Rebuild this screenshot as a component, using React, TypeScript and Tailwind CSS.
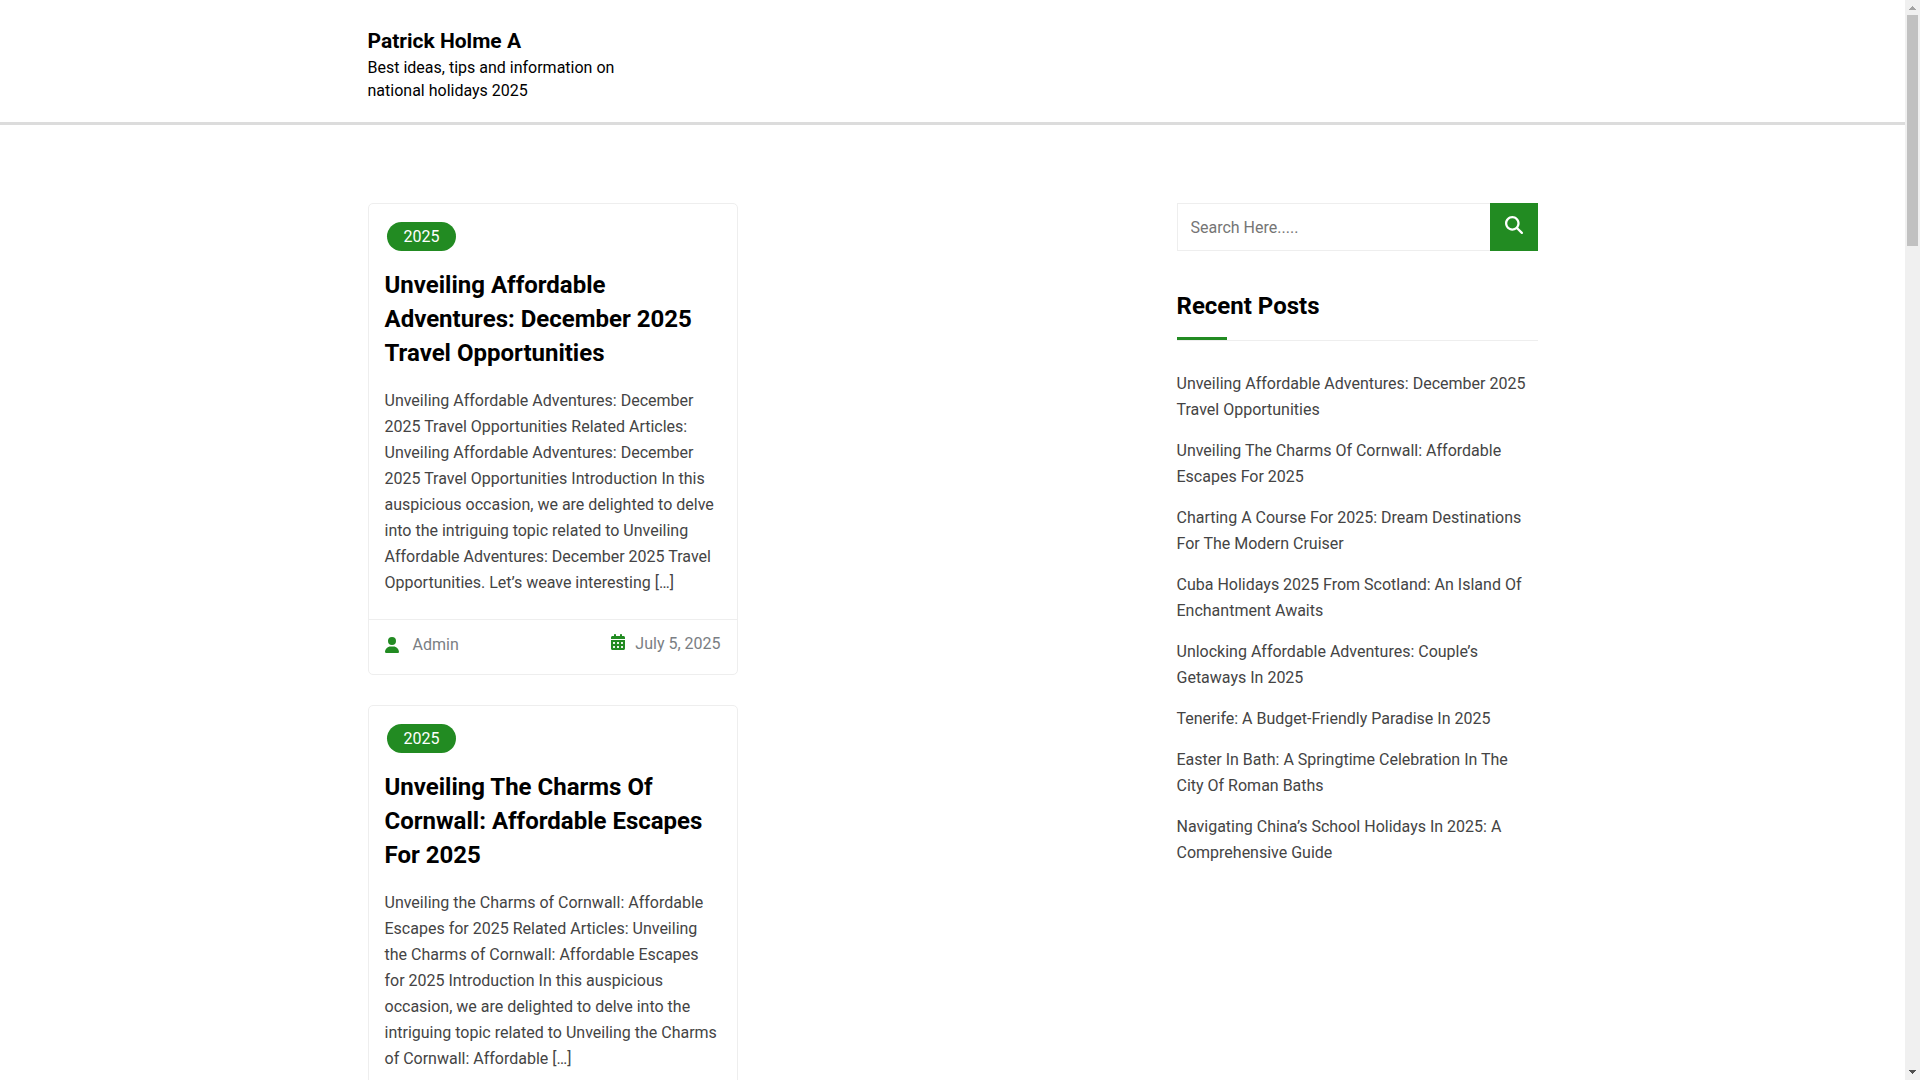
import { FaCalendarDays, FaMagnifyingGlass, FaUser } from 'react-icons/fa6';

interface Post {
  category: string;
  title: string;
  excerpt: string;
  author?: string;
  date?: string;
}

const posts: Post[] = [
  {
    category: '2025',
    title: 'Unveiling Affordable Adventures: December 2025 Travel Opportunities',
    excerpt:
      'Unveiling Affordable Adventures: December 2025 Travel Opportunities Related Articles: Unveiling Affordable Adventures: December 2025 Travel Opportunities Introduction In this auspicious occasion, we are delighted to delve into the intriguing topic related to Unveiling Affordable Adventures: December 2025 Travel Opportunities. Let’s weave interesting […]',
    author: 'Admin',
    date: 'July 5, 2025',
  },
  {
    category: '2025',
    title: 'Unveiling The Charms Of Cornwall: Affordable Escapes For 2025',
    excerpt:
      'Unveiling the Charms of Cornwall: Affordable Escapes for 2025 Related Articles: Unveiling the Charms of Cornwall: Affordable Escapes for 2025 Introduction In this auspicious occasion, we are delighted to delve into the intriguing topic related to Unveiling the Charms of Cornwall: Affordable […]',
  },
];

const recentPosts = [
  'Unveiling Affordable Adventures: December 2025 Travel Opportunities',
  'Unveiling The Charms Of Cornwall: Affordable Escapes For 2025',
  'Charting A Course For 2025: Dream Destinations For The Modern Cruiser',
  'Cuba Holidays 2025 From Scotland: An Island Of Enchantment Awaits',
  'Unlocking Affordable Adventures: Couple’s Getaways In 2025',
  'Tenerife: A Budget-Friendly Paradise In 2025',
  'Easter In Bath: A Springtime Celebration In The City Of Roman Baths',
  'Navigating China’s School Holidays In 2025: A Comprehensive Guide',
];

function Header() {
  return (
    <header className="border-b-[3px] border-[#dcdcdc]">
      <div className="mx-auto max-w-[1200px] px-[15px] pt-[26px] pb-5">
        <div className="max-w-[270px]">
          <h1 className="text-[21px] leading-[30px] font-bold">
            <a href="#">Patrick Holme A</a>
          </h1>
          <p className="text-base leading-[23px]">
            Best ideas, tips and information on national holidays 2025
          </p>
        </div>
      </div>
    </header>
  );
}

function PostCard({ post }: { post: Post }) {
  return (
    <article className="rounded-[5px] border border-[#eeeeee]">
      <div className="px-4 pt-[18px] pb-[23px]">
        <a
          href="#"
          className="ml-[2px] block w-fit rounded-full bg-[#228b22] px-[17px] text-base leading-[29px] text-white"
        >
          {post.category}
        </a>
        <h2 className="mt-[17px] text-2xl leading-[34px] font-bold">
          <a href="#">{post.title}</a>
        </h2>
        <p className="mt-[18px] text-base leading-[26px] text-[#444444]">{post.excerpt}</p>
      </div>

      {post.author && (
        <div className="flex items-start justify-between border-t border-[#eeeeee] px-4 pt-3 pb-4 text-base text-[#7a7e83]">
          <a href="#" className="flex items-center gap-[14px] leading-[26px]">
            <FaUser className="h-4 w-[14px] text-[#228b22]" />
            {post.author}
          </a>
          <a href="#" className="flex items-start gap-[10px] leading-[23px]">
            <FaCalendarDays className="mt-[2px] h-4 w-[14px] text-[#228b22]" />
            {post.date}
          </a>
        </div>
      )}
    </article>
  );
}

function Sidebar() {
  return (
    <aside className="w-1/3 pr-[15px] pl-6">
      <form className="flex h-12" onSubmit={(e) => e.preventDefault()}>
        <input
          type="search"
          aria-label="Search"
          placeholder="Search Here....."
          className="min-w-0 flex-1 border border-r-0 border-[#eeeeee] px-[13px] pt-[2px] text-base outline-none placeholder:text-[#757575]"
        />
        <button
          type="submit"
          aria-label="Submit search"
          className="flex w-12 items-center justify-center bg-[#228b22] pb-1 text-white"
        >
          <FaMagnifyingGlass className="size-[18px]" />
        </button>
      </form>

      <div className="mt-[38px] border-b border-[#eeeeee]">
        <h2 className="pb-[14px] text-2xl leading-[34px] font-bold">Recent Posts</h2>
        <div className="h-[3px] w-[50px] bg-[#228b22]" />
      </div>

      <ul className="mt-[30px] flex flex-col gap-[15px] text-base leading-[26px] text-[#444444]">
        {recentPosts.map((title) => (
          <li key={title}>
            <a href="#">{title}</a>
          </li>
        ))}
      </ul>
    </aside>
  );
}

function ScrollBar() {
  return (
    <div className="flex w-[15px] shrink-0 flex-col items-center bg-[#f0f0f0]" aria-hidden="true">
      <svg className="h-[15px] w-[15px]" viewBox="0 0 15 15" shapeRendering="crispEdges">
        <path d="M7.5 6 L11 10 H4 Z" fill="#a3a3a3" />
      </svg>
      <div className="h-[231px] w-[11px] bg-[#c1c1c1]" />
      <svg className="mt-auto h-[15px] w-[15px]" viewBox="0 0 15 15" shapeRendering="crispEdges">
        <path d="M4 5 H11 L7.5 9 Z" fill="#505050" />
      </svg>
    </div>
  );
}

export default function App() {
  return (
    <div className="flex h-screen bg-white font-['Roboto',sans-serif] text-black">
      <div className="min-w-0 flex-1 overflow-hidden">
        <Header />

        <main className="mx-auto flex max-w-[1200px] pt-[78px]">
          <section className="w-2/3">
            <div className="flex w-1/2 flex-col gap-[30px] px-[15px]">
              {posts.map((post) => (
                <PostCard key={post.title} post={post} />
              ))}
            </div>
          </section>
          <Sidebar />
        </main>
      </div>
      <ScrollBar />
    </div>
  );
}
